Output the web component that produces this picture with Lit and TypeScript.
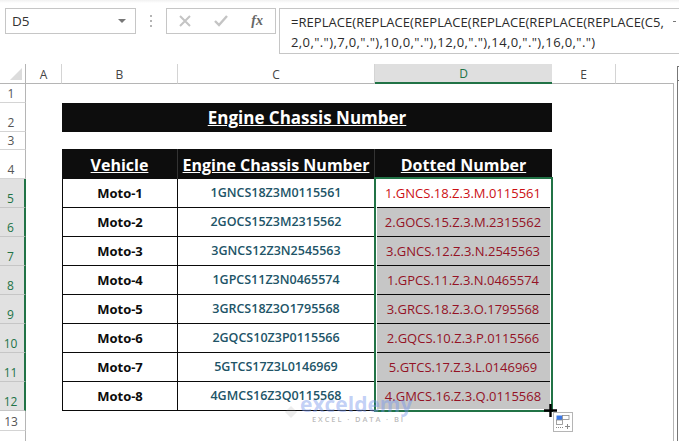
import { LitElement, html, css } from "lit";
import { customElement } from "lit/decorators.js";

const DATA = [
  ["Moto-1", "1GNCS18Z3M0115561", "1.GNCS.18.Z.3.M.0115561"],
  ["Moto-2", "2GOCS15Z3M2315562", "2.GOCS.15.Z.3.M.2315562"],
  ["Moto-3", "3GNCS12Z3N2545563", "3.GNCS.12.Z.3.N.2545563"],
  ["Moto-4", "1GPCS11Z3N0465574", "1.GPCS.11.Z.3.N.0465574"],
  ["Moto-5", "3GRCS18Z3O1795568", "3.GRCS.18.Z.3.O.1795568"],
  ["Moto-6", "2GQCS10Z3P0115566", "2.GQCS.10.Z.3.P.0115566"],
  ["Moto-7", "5GTCS17Z3L0146969", "5.GTCS.17.Z.3.L.0146969"],
  ["Moto-8", "4GMCS16Z3Q0115568", "4.GMCS.16.Z.3.Q.0115568"],
];

@customElement("app-root")
export class AppRoot extends LitElement {
  static styles = css`
    :host {
      display: block;
      width: 679px;
      height: 441px;
      overflow: hidden;
      background: #fff;
      font-family: "Open Sans", "Noto Sans", sans-serif;
      color: #222;
      position: relative;
    }
    .bar {
      height: 64px;
      box-sizing: border-box;
      padding: 8px 0 0 5px;
      display: flex;
      align-items: flex-start;
      background: linear-gradient(#f1f1f1 0, #fff 3px);
    }
    .namebox {
      width: 131px;
      height: 26px;
      box-sizing: border-box;
      border: 1px solid #c6c6c6;
      display: flex;
      align-items: center;
      justify-content: space-between;
      padding: 0 9px 0 6px;
      font-size: 13.5px;
      color: #333;
    }
    .caret {
      width: 0;
      height: 0;
      border-left: 4px solid transparent;
      border-right: 4px solid transparent;
      border-top: 4px solid #777;
    }
    .dots {
      width: 30px;
      height: 26px;
      display: flex;
      flex-direction: column;
      align-items: center;
      justify-content: center;
      gap: 3px;
    }
    .dots i {
      width: 2px;
      height: 2px;
      background: #b4b4b4;
    }
    .fxbox {
      width: 110px;
      height: 26px;
      box-sizing: border-box;
      border: 1px solid #c6c6c6;
      display: flex;
      align-items: center;
      justify-content: space-between;
      padding: 0 12px 0 12px;
    }
    .fx {
      font-family: "Liberation Serif", serif;
      font-style: italic;
      font-weight: bold;
      font-size: 14px;
      color: #666;
    }
    .formula {
      margin-left: 3px;
      flex: 1;
      height: 46px;
      box-sizing: border-box;
      border: 1px solid #c6c6c6;
      border-right: 0;
      padding: 3px 0 0 11px;
      font-size: 13px;
      line-height: 20px;
      color: #2b2b2b;
      white-space: nowrap;
      position: relative;
      letter-spacing: 0.05px;
    }
    .formula div:last-of-type {
      letter-spacing: 0.4px;
    }
    .formula .up {
      position: absolute;
      right: 3px;
      top: 12px;
      width: 3px;
      height: 1px;
      background: #777;
    }
    .sheet {
      display: grid;
      grid-template-columns: 26px 36px 116px 197px 177px 64px 58px 5px;
      grid-template-rows: 20px 19px 29px 18px 29px repeat(8, 29px) 20px 10px;
      position: relative;
      font-family: "Liberation Sans", sans-serif;
    }
    .corner {
      border-right: 1px solid #b5b5b5;
      border-bottom: 1px solid #b5b5b5;
      box-sizing: border-box;
      background: #fff;
      position: relative;
    }
    .corner::after {
      content: "";
      position: absolute;
      right: 3px;
      bottom: 3px;
      border-style: solid;
      border-width: 0 0 12px 12px;
      border-color: transparent transparent #dcdcdc transparent;
    }
    .ch {
      box-sizing: border-box;
      border-right: 1px solid #d4d4d4;
      border-bottom: 1px solid #b5b5b5;
      font-family: "Open Sans", sans-serif;
      font-size: 12px;
      color: #444;
      display: flex;
      align-items: center;
      justify-content: center;
      padding-top: 1px;
    }
    .ch.sel {
      background: #dfdfdf;
      color: #217346;
      border-bottom: 2px solid #217346;
      border-right: 0;
    }
    .ch.blank {
      border-right: 0;
    }
    .rh {
      box-sizing: border-box;
      grid-column: 1;
      border-right: 1px solid #b5b5b5;
      border-bottom: 1px solid #d4d4d4;
      font-family: "Open Sans", sans-serif;
      font-size: 12px;
      color: #555;
      display: flex;
      align-items: flex-end;
      justify-content: center;
      padding: 0 3px 0 0;
    }
    .rh.sel {
      background: #e1e1e1;
      color: #217346;
      border-right: 2px solid #217346;
      border-bottom: 1px solid #c6c6c6;
    }
    .vline {
      grid-column: 7;
      grid-row: 2 / -1;
      border-right: 1px solid #b5b5b5;
    }
    .title {
      grid-column: 3 / 6;
      grid-row: 3;
      background: #0d0d0d;
      color: #fff;
      font-family: "Open Sans", sans-serif;
      font-weight: 700;
      font-size: 17px;
      text-decoration: underline;
      display: flex;
      align-items: center;
      justify-content: center;
    }
    .th {
      box-sizing: border-box;
      margin-top: -1px;
      padding-top: 1px;
      background: #0d0d0d;
      color: #fff;
      font-family: "Open Sans", sans-serif;
      font-weight: 700;
      font-size: 16px;
      text-decoration: underline;
      display: flex;
      align-items: center;
      justify-content: center;
      white-space: nowrap;
      border-right: 1px solid #333;
    }
    .th.last {
      border-right: 0;
    }
    .td {
      box-sizing: border-box;
      border-right: 1px solid #0a0a0a;
      border-bottom: 1px solid #0a0a0a;
      font-family: "Open Sans", sans-serif;
      font-size: 13px;
      display: flex;
      align-items: center;
      justify-content: center;
      white-space: nowrap;
      padding-bottom: 1px;
    }
    .first {
      border-left: 1px solid #0a0a0a;
      font-weight: 700;
      color: #0c0c0c;
    }
    .chassis {
      font-weight: 600;
      font-size: 12.5px;
      color: #215467;
    }
    .dotted {
      color: #941225;
      background: #c6c6c6;
    }
    .dotted.top {
      background: #fff;
      color: #cc0f14;
    }
    .selection {
      grid-column: 5;
      grid-row: 6 / 14;
      border: 2px solid #217346;
      margin: -2px -1px -1px -1px;
      pointer-events: none;
      z-index: 2;
      box-sizing: border-box;
      outline: 1px solid #fff;
      outline-offset: -3px;
    }
    .scroll {
      grid-column: 8;
      grid-row: 1 / -1;
      margin: 2px 0 0 3px;
      width: 1px;
      background: #777;
      position: relative;
    }
    .scroll::before,
    .scroll::after {
      content: "";
      position: absolute;
      left: 0;
      width: 2px;
      height: 1px;
      background: #777;
    }
    .scroll::before {
      top: 0;
    }
    .scroll::after {
      top: 14px;
    }
    .mark {
      position: absolute;
      left: 284px;
      top: 392px;
      width: 130px;
      height: 34px;
      z-index: 3;
      pointer-events: none;
      line-height: 1;
    }
    .logo-word {
      font-family: "Open Sans", sans-serif;
      font-weight: 700;
      font-size: 21px;
      color: rgba(120, 150, 235, 0.45);
      position: absolute;
      left: 16px;
      top: 2px;
    }
    .logo-sub {
      font-family: "Open Sans", sans-serif;
      font-weight: 600;
      font-size: 7.5px;
      letter-spacing: 1.9px;
      color: rgba(140, 140, 140, 0.6);
      position: absolute;
      left: 28px;
      top: 24px;
      white-space: nowrap;
    }
    .logo-box {
      position: absolute;
      left: 0;
      top: 6px;
    }
    .cross {
      position: absolute;
      left: 544px;
      top: 404px;
      z-index: 4;
    }
    .paste {
      position: absolute;
      left: 553px;
      top: 412px;
      z-index: 4;
    }
  `;

  render() {
    const rowLabels = [1, 2, 3, 4];
    return html`
      <div class="bar">
        <div class="namebox"><span>D5</span><span class="caret"></span></div>
        <div class="dots"><i></i><i></i><i></i></div>
        <div class="fxbox">
          <svg width="12" height="12" viewBox="0 0 12 12">
            <path d="M1 1 L11 11 M11 1 L1 11" stroke="#c4c4c4" stroke-width="2" fill="none" />
          </svg>
          <svg width="14" height="12" viewBox="0 0 14 12">
            <path d="M1 6 L5 10 L13 1" stroke="#c4c4c4" stroke-width="2.4" fill="none" />
          </svg>
          <span class="fx">fx</span>
        </div>
        <div class="formula">
          <div>=REPLACE(REPLACE(REPLACE(REPLACE(REPLACE(REPLACE(C5,</div>
          <div>2,0,"."),7,0,"."),10,0,"."),12,0,"."),14,0,"."),16,0,".")</div>
          <span class="up"></span>
        </div>
      </div>
      <div class="sheet">
        <div class="corner"></div>
        <div class="ch">A</div>
        <div class="ch">B</div>
        <div class="ch">C</div>
        <div class="ch sel">D</div>
        <div class="ch">E</div>
        <div class="ch blank"></div>
        <div class="scroll"></div>

        ${rowLabels.map((n) => html`<div class="rh" style="grid-row:${n + 1}">${n}</div>`)}
        <div class="title">Engine Chassis Number</div>

        <div class="th" style="grid-column:3;grid-row:5">Vehicle</div>
        <div class="th" style="grid-column:4;grid-row:5">Engine Chassis Number</div>
        <div class="th last" style="grid-column:5;grid-row:5">Dotted Number</div>

        ${DATA.map(
          (r, i) => html`
            <div class="rh sel" style="grid-row:${i + 6}">${i + 5}</div>
            <div class="td first" style="grid-column:3;grid-row:${i + 6}">${r[0]}</div>
            <div class="td chassis" style="grid-column:4;grid-row:${i + 6}">${r[1]}</div>
            <div class="td dotted ${i === 0 ? "top" : ""}" style="grid-column:5;grid-row:${i + 6}">${r[2]}</div>
          `
        )}
        <div class="rh" style="grid-row:14">13</div>
        <div class="rh" style="grid-row:15;border-bottom:0"></div>
        <div class="vline"></div>
        <div class="selection"></div>
      </div>

      <div class="mark">
        <svg class="logo-box" width="14" height="26" viewBox="0 0 14 26">
          <path d="M1 14 L7 8 L13 14 L7 20 Z" fill="rgba(150,150,150,0.18)" />
        </svg>
        <span class="logo-word">exceldemy</span>
        <span class="logo-sub">EXCEL · DATA · BI</span>
      </div>

      <svg class="cross" width="13" height="13" viewBox="0 0 13 13">
        <path d="M6.5 0 V13 M0 6.5 H13" stroke="#000" stroke-width="2.4" fill="none" />
      </svg>
      <svg class="paste" width="20" height="20" viewBox="0 0 20 20">
        <rect x="0.5" y="0.5" width="19" height="19" fill="#fff" stroke="#b5b5b5" />
        <rect x="3.5" y="3.5" width="6" height="4.5" fill="#3c78e6" />
        <rect x="9.5" y="3.5" width="6.5" height="4" fill="#fff" stroke="#8a8a8a" stroke-width="0.8" />
        <rect x="3.5" y="8" width="6" height="4.5" fill="#fff" stroke="#8a8a8a" stroke-width="0.8" />
        <path d="M3 15.5 H10" stroke="#8a8a8a" stroke-dasharray="1 1" />
        <path d="M12 14.5 H17 M14.5 12 V17" stroke="#8a8a8a" />
      </svg>
    `;
  }
}
